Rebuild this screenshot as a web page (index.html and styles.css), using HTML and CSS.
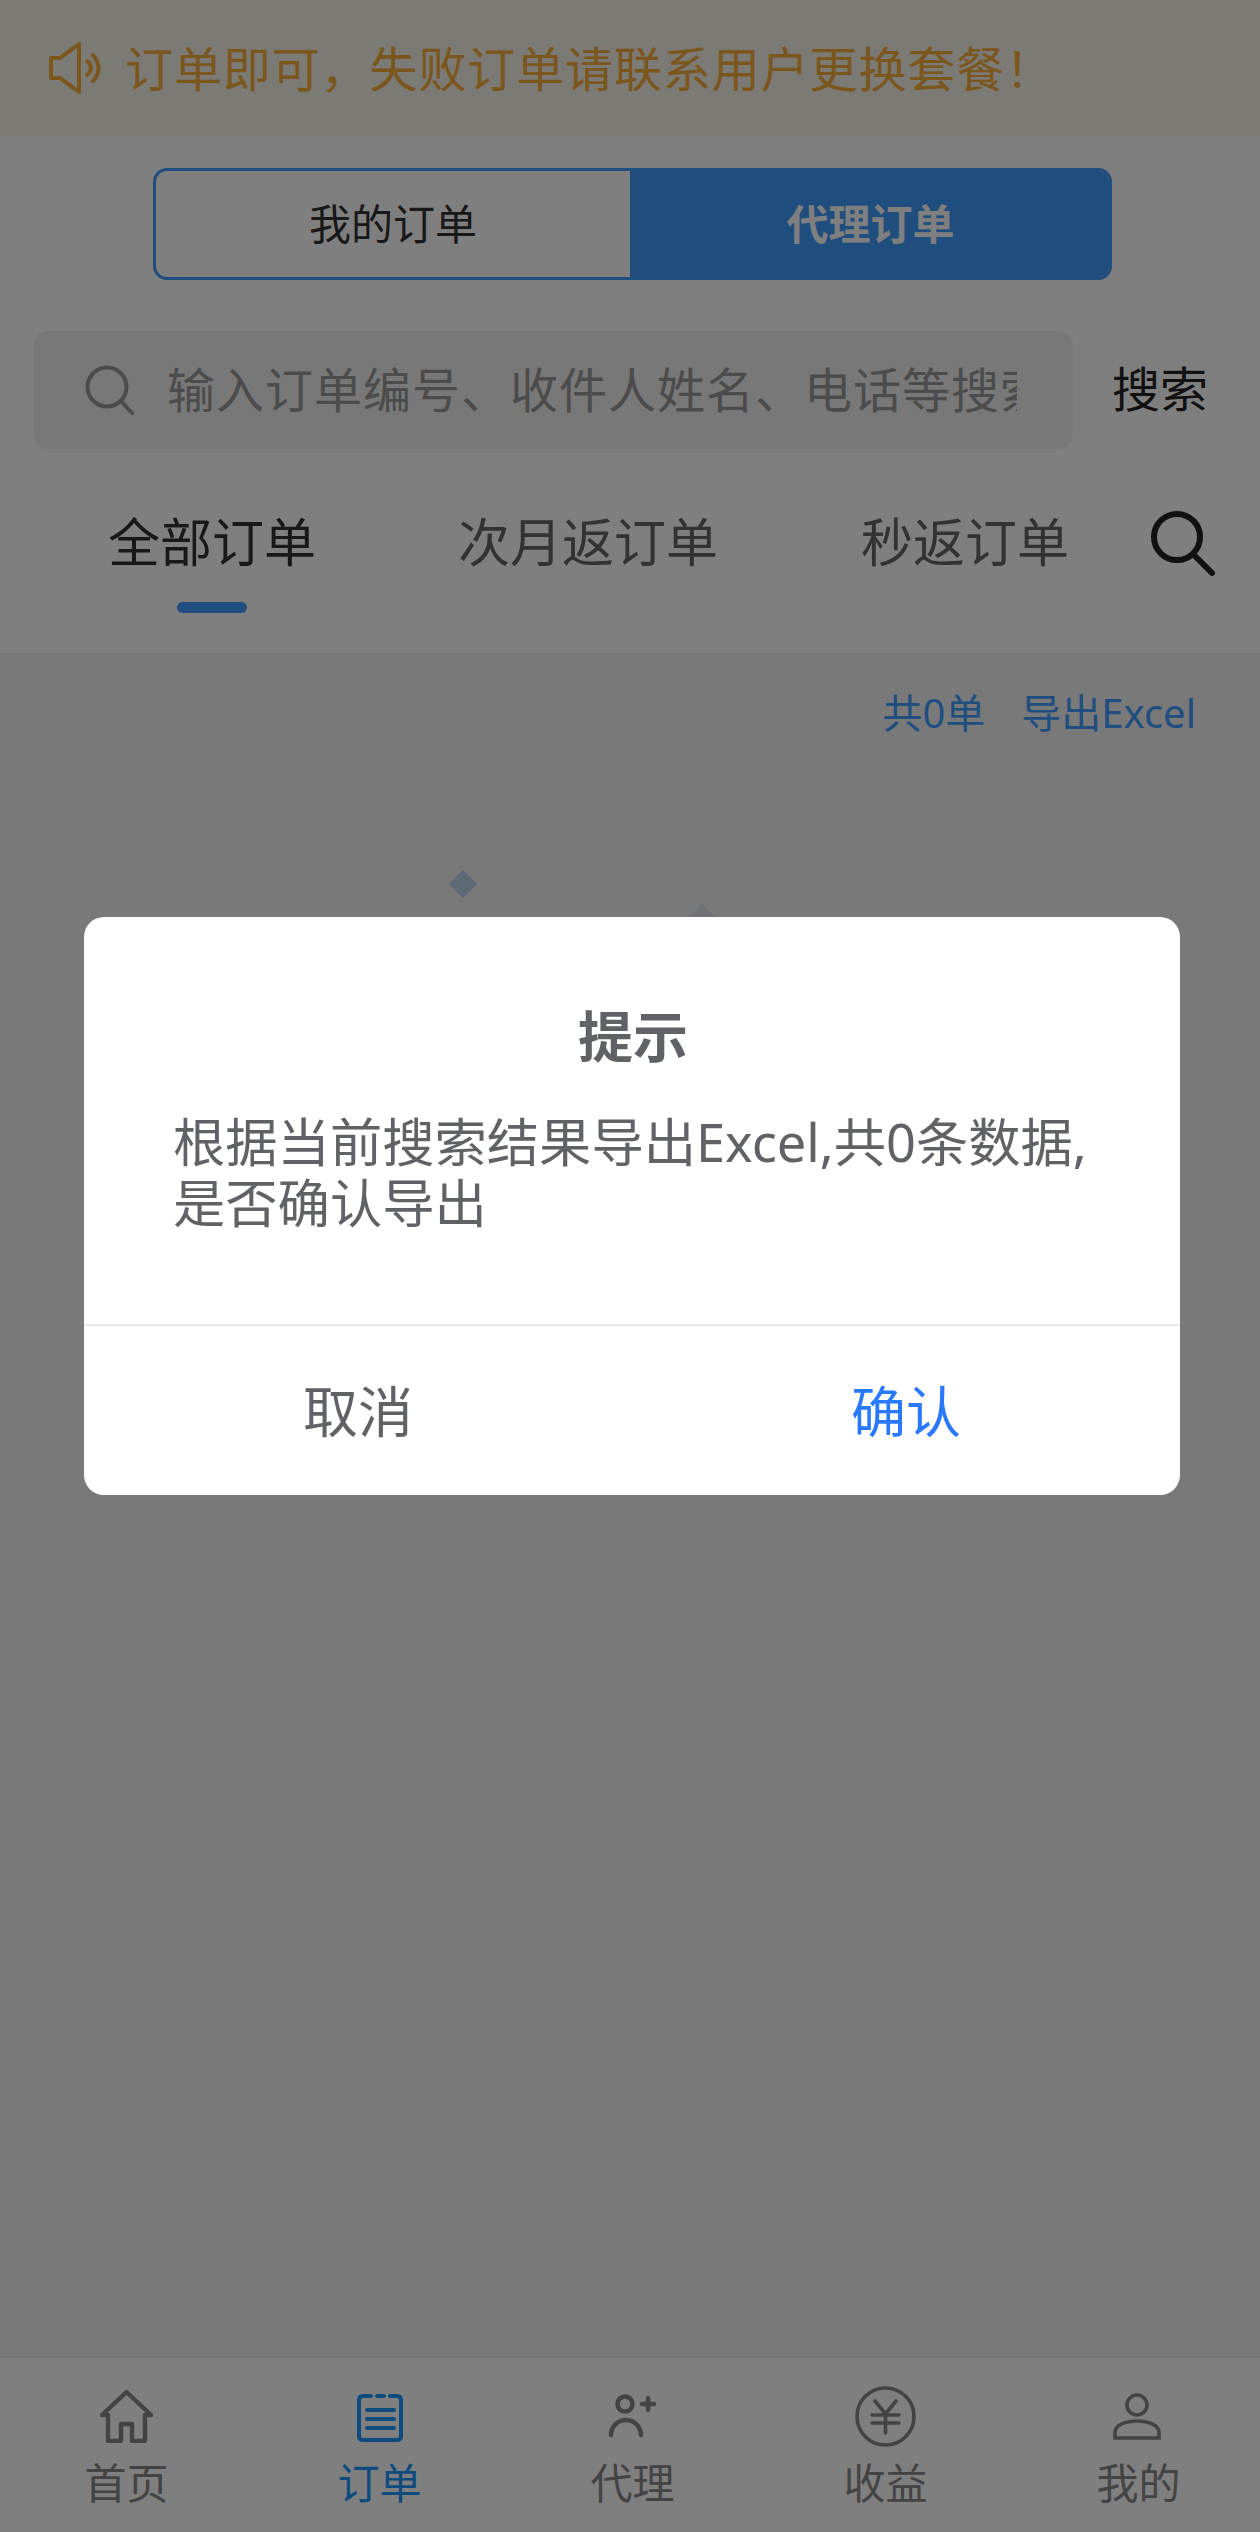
FILE: index.html
```html
<!DOCTYPE html>
<html lang="zh-CN">
<head>
<meta charset="utf-8">
<title>订单</title>
<link rel="stylesheet" href="styles.css">
</head>
<body>
<div class="page">
  <header class="notice">
    <svg class="notice-icon" viewBox="0 0 54 54" fill="none" stroke="currentColor" stroke-width="4" stroke-linejoin="round" stroke-linecap="round">
      <path d="M3 17H12L31 3V51L12 37H3Z"/>
      <path d="M39 20Q47 27 39 34"/>
      <path d="M45 14Q56 27 45 40"/>
    </svg>
    <span class="notice-text">订单即可，失败订单请联系用户更换套餐！</span>
  </header>
  <section class="top">
    <div class="toggle">
      <div class="toggle-item toggle-left">我的订单</div>
      <div class="toggle-item toggle-on">代理订单</div>
    </div>
    <div class="search-row">
      <div class="search-box">
        <svg class="search-icon" viewBox="0 0 50 50" fill="none" stroke="currentColor" stroke-width="4" stroke-linecap="round">
          <circle cx="22" cy="22" r="19.500"/><path d="M37 37L47 48"/>
        </svg>
        <span class="search-text">输入订单编号、收件人姓名、电话等搜索</span>
      </div>
      <div class="search-btn">搜索</div>
    </div>
    <nav class="tabs">
      <div class="tab tab-on">全部订单</div>
      <div class="tab tab-2">次月返订单</div>
      <div class="tab tab-3">秒返订单</div>
      <svg class="tabs-icon" viewBox="0 0 64 66" fill="none" stroke="currentColor" stroke-width="6" stroke-linecap="round">
        <circle cx="26" cy="27" r="23"/><path d="M44 46L61 63"/>
      </svg>
    </nav>
  </section>
  <main class="content">
    <div class="summary"><span>共0单</span><span>导出Excel</span></div>
    <i class="diamond diamond-a"></i>
    <i class="diamond diamond-b"></i>
  </main>
  <footer class="tabbar">
    <div class="bar-item">
      <svg class="ic ic-home" viewBox="0 0 53 53" fill="none" stroke="currentColor" stroke-width="4.400" stroke-linejoin="round"><path d="M26.500 2L2 25H8V51H21V34H32V51H45V25H51Z"/></svg>
      <span>首页</span>
    </div>
    <div class="bar-item bar-on">
      <svg class="ic ic-order" viewBox="0 0 46 48" fill="none" stroke="currentColor" stroke-width="4" stroke-linecap="round"><path d="M14 2H6Q2 2 2 6V42Q2 46 6 46H40Q44 46 44 42V6Q44 2 40 2H33"/><path d="M20 2H27M10 16H37M10 25H37M10 34H37"/></svg>
      <span>订单</span>
    </div>
    <div class="bar-item">
      <svg class="ic ic-agent" viewBox="0 0 50 46" fill="none" stroke="currentColor" stroke-width="4.500" stroke-linecap="round"><circle cx="19" cy="10" r="7.500"/><path d="M5 41A15 15 0 0 1 35 41"/><path d="M36 10H48M42 4V16"/></svg>
      <span>代理</span>
    </div>
    <div class="bar-item">
      <svg class="ic ic-yen" viewBox="0 0 62 62" fill="none" stroke="currentColor" stroke-width="3.600" stroke-linecap="round"><circle cx="30.500" cy="30.500" r="28.500"/><path d="M20 15L30.500 28L41 15M17 29H44M17 37H44M30.500 28V47"/></svg>
      <span>收益</span>
    </div>
    <div class="bar-item">
      <svg class="ic ic-me" viewBox="0 0 50 50" fill="none" stroke="currentColor" stroke-width="3.600"><circle cx="25" cy="13" r="10"/><path d="M3 46V40C3 33 14 29 25 29C36 29 47 33 47 40V46Z"/></svg>
      <span>我的</span>
    </div>
  </footer>
</div>
<div class="mask">
  <div class="dialog">
    <div class="dialog-body">
      <div class="dialog-title">提示</div>
      <div class="dialog-msg">根据当前搜索结果导出Excel,共0条数据,是否确认导出</div>
    </div>
    <div class="dialog-foot">
      <div class="dialog-btn">取消</div>
      <div class="dialog-btn dialog-ok">确认</div>
    </div>
  </div>
</div>
</body>
</html>
```
FILE: styles.css
```css
* { box-sizing: border-box; }
html, body { margin: 0; padding: 0; }
body {
  width: 1260px;
  height: 2532px;
  overflow: hidden;
  position: relative;
  font-family: "Noto Sans", "Noto Sans CJK SC", sans-serif;
  color: #333;
}
.page { height: 2532px; display: flex; flex-direction: column; background: #f2f2f2; }

.notice {
  height: 135px;
  flex: none;
  background: #f8f4ea;
  color: #f7ad3a;
  display: flex;
  align-items: center;
  padding-left: 48px;
  gap: 23px;
  font-size: 48px;
  letter-spacing: .9px;
  white-space: nowrap;
  overflow: hidden;
}
.notice-icon { width: 54px; height: 54px; flex: none; }
.notice-text { margin-bottom: 3px; }

.top { flex: none; height: 518px; background: #fff; display: flex; flex-direction: column; }
.toggle {
  margin: 33px 148px 0 153px;
  height: 112px;
  display: flex;
  border: 3px solid #409eff;
  border-radius: 14px;
  overflow: hidden;
  font-size: 42px;
}
.toggle-item { display: flex; align-items: center; justify-content: center; color: #333; padding-bottom: 5px; }
.toggle-left { width: 474px; flex: none; }
.toggle-on { flex: 1; background: #409eff; color: #fff; font-weight: 700; padding-left: 2px; }

.search-row { margin-top: 51px; padding: 0 52px 0 34px; display: flex; align-items: center; justify-content: space-between; }
.search-box {
  width: 1039px;
  height: 118px;
  background: #f0f0f0;
  border-radius: 14px;
  display: flex;
  align-items: center;
  padding-left: 51px;
  gap: 32px;
  color: #999;
  font-size: 48px;
  letter-spacing: 1px;
}
.search-icon { width: 50px; height: 50px; flex: none; }
.search-text { width: 850px; margin-bottom: 7px; overflow: hidden; white-space: nowrap; }
.search-btn { font-size: 48px; color: #222; margin-bottom: 9px; }

.tabs { position: relative; flex: 1; display: flex; align-items: flex-start; font-size: 52px; color: #666; }
.tab { padding-top: 57px; line-height: 72px; }
.tab-on { margin-left: 108px; color: #333; position: relative; }
.tab-on::after {
  content: "";
  position: absolute;
  left: 69px;
  top: 153px;
  width: 70px;
  height: 11px;
  border-radius: 6px;
  background: #409eff;
}
.tab-2 { margin-left: 142px; }
.tab-3 { margin-left: 143px; }
.tabs-icon { width: 64px; height: 66px; margin: 61px 0 0 82px; color: #222; flex: none; }

.content { flex: 1; position: relative; background: #f2f2f2; }
.summary {
  display: flex;
  justify-content: flex-end;
  gap: 36px;
  padding: 32px 64px 0 0;
  font-size: 40px;
  line-height: 56px;
  color: #409eff;
}
.diamond { position: absolute; width: 20px; height: 20px; transform: rotate(45deg); }
.diamond-a { left: 453px; top: 221px; background: #bcd2ec; }
.diamond-b { left: 692px; top: 255px; background: #e0e4ec; }

.tabbar {
  flex: none;
  height: 176px;
  background: #fff;
  border-top: 2px solid #e8e8e8;
  display: grid;
  grid-template-columns: repeat(5, 253px);
}
.bar-item { position: relative; display: flex; flex-direction: column; align-items: center; justify-content: flex-end; padding-bottom: 21px; color: #888; font-size: 42px; line-height: 56px; }
.bar-on { color: #1c96ff; }
.ic { position: absolute; }
.ic-home { width: 53px; height: 53px; top: 32px; left: 100px; }
.ic-order { width: 46px; height: 48px; top: 36px; left: 104px; }
.ic-agent { width: 50px; height: 46px; top: 36px; left: 100px; }
.ic-yen { width: 62px; height: 62px; top: 28px; left: 96px; }
.ic-me { width: 50px; height: 50px; top: 34px; left: 100px; }

.mask {
  position: absolute;
  inset: 0;
  background: rgba(0, 0, 0, .5);
  padding: 917px 80px 0 84px;
}
.dialog { width: 1096px; height: 578px; background: #fff; border-radius: 20px; display: flex; flex-direction: column; overflow: hidden; color: #606266; }
.dialog-body { height: 409px; border-bottom: 2px solid #e4e7ed; padding: 81px 88px 0 90px; }
.dialog-title { text-align: center; font-size: 55px; font-weight: 700; line-height: 76px; }
.dialog-msg { margin-top: 37px; font-size: 52.300px; line-height: 61px; margin-left: -1px; }
.dialog-foot { flex: 1; display: flex; }
.dialog-btn { flex: 1; display: flex; align-items: center; justify-content: center; font-size: 55px; padding-bottom: 5px; }
.dialog-ok { color: #2979ff; }
```
